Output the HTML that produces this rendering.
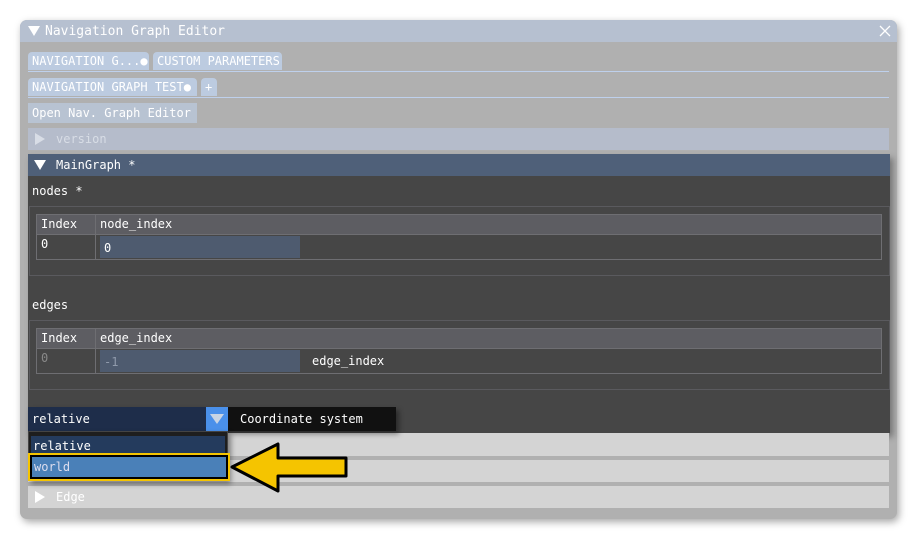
<!DOCTYPE html>
<html><head><style>
*{box-sizing:border-box;margin:0;padding:0}
body{width:918px;height:540px;background:#fff;position:relative;overflow:hidden;font-family:"DejaVu Sans Mono","Liberation Mono",monospace;font-size:12px}
.a{position:absolute;white-space:nowrap}
.win{left:20px;top:20px;width:877px;height:499px;background:#b0b0b0;border-radius:7px;box-shadow:2px 3px 8px rgba(0,0,0,.35)}
.t{color:#fff;white-space:nowrap;line-height:1}
.tab{background:#bccbe0;color:#fff;height:18px;line-height:18px;padding:0 4px;border-radius:4px 4px 0 0;overflow:hidden}
.line{height:1px;background:#bed0ec;left:28px;width:861px}
.hd{background:#5d5d62}
.bd{border:1px solid #6e6e72}
.tri{position:absolute}
</style></head><body>
<div class="a win"></div>
<div class="a" style="left:20px;top:20px;width:877px;height:22px;background:#b6c0d0;border-radius:7px 7px 0 0"></div>
<svg class="tri" style="left:28px;top:26px" width="12" height="11"><path d="M0 0H12L6 10Z" fill="#fff"/></svg>
<div class="a t" style="left:45px;top:25px;font-size:13px">Navigation Graph Editor</div>
<svg class="a" style="left:879px;top:25px" width="12" height="12"><path d="M1 1L11 11M11 1L1 11" stroke="#fff" stroke-width="1.3"/></svg>

<div class="a tab" style="left:28px;top:52px;width:121px">NAVIGATION G...●</div>
<div class="a tab" style="left:153px;top:52px;width:129px">CUSTOM PARAMETERS</div>
<div class="a line" style="top:71px"></div>
<div class="a tab" style="left:28px;top:78px;width:169px">NAVIGATION GRAPH TEST●</div>
<div class="a tab" style="left:201px;top:78px;width:16px;padding:0 4px">+</div>
<div class="a line" style="top:97px"></div>
<div class="a" style="left:28px;top:103px;width:169px;height:20px;background:#b8c3d2;color:#fff;line-height:20px;padding-left:4px">Open Nav. Graph Editor</div>
<div class="a" style="left:28px;top:128px;width:861px;height:22px;background:#b5bccb;color:#d8dde6;line-height:22px;padding-left:28px">version</div>
<svg class="tri" style="left:35px;top:133px" width="10" height="12"><path d="M0 0V12L10 6Z" fill="#d8dde6"/></svg>

<div class="a" style="left:28px;top:154px;width:862px;height:279px;background:#464646;box-shadow:3px 4px 6px rgba(0,0,0,.35)"></div>
<div class="a" style="left:28px;top:154px;width:862px;height:22px;background:#4f6079;color:#fff;line-height:22px;padding-left:28px">MainGraph *</div>
<svg class="tri" style="left:34px;top:160px" width="12" height="11"><path d="M0 0H12L6 10Z" fill="#fff"/></svg>
<div class="a t" style="left:32px;top:185px">nodes *</div>
<div class="a bd" style="left:29px;top:206px;width:861px;height:70px;border-color:#5a5a5e"></div>
<div class="a bd" style="left:36px;top:214px;width:846px;height:46px"></div>
<div class="a hd" style="left:37px;top:215px;width:844px;height:20px;border-bottom:1px solid #6e6e72"></div>
<div class="a" style="left:95px;top:215px;width:1px;height:44px;background:#6e6e72"></div>
<div class="a t" style="left:41px;top:218px">Index</div>
<div class="a t" style="left:100px;top:218px">node_index</div>
<div class="a t" style="left:41px;top:238px">0</div>
<div class="a" style="left:100px;top:236px;width:200px;height:22px;background:#4e5b6f"></div>
<div class="a t" style="left:104px;top:242px">0</div>

<div class="a t" style="left:32px;top:299px">edges</div>
<div class="a bd" style="left:29px;top:320px;width:861px;height:70px;border-color:#5a5a5e"></div>
<div class="a bd" style="left:36px;top:328px;width:846px;height:46px"></div>
<div class="a hd" style="left:37px;top:329px;width:844px;height:20px;border-bottom:1px solid #6e6e72"></div>
<div class="a" style="left:95px;top:329px;width:1px;height:44px;background:#6e6e72"></div>
<div class="a t" style="left:41px;top:332px">Index</div>
<div class="a t" style="left:100px;top:332px">edge_index</div>
<div class="a t" style="left:41px;top:352px;color:#888">0</div>
<div class="a" style="left:100px;top:350px;width:200px;height:22px;background:#4e5b6f"></div>
<div class="a t" style="left:104px;top:356px;color:#8f9aab">-1</div>
<div class="a t" style="left:312px;top:355px">edge_index</div>

<div class="a" style="left:28px;top:433px;width:861px;height:23px;background:#d4d4d4"></div>
<div class="a" style="left:28px;top:460px;width:861px;height:22px;background:#d4d4d4"></div>
<div class="a" style="left:28px;top:486px;width:861px;height:22px;background:#d4d4d4;color:#fff;line-height:22px;padding-left:28px">Edge</div>
<svg class="tri" style="left:35px;top:491px" width="10" height="12"><path d="M0 0V12L10 6Z" fill="#fff"/></svg>

<div class="a" style="left:28px;top:407px;width:368px;height:24px;background:#111;box-shadow:3px 3px 5px rgba(0,0,0,.4)"></div>
<div class="a" style="left:28px;top:407px;width:178px;height:24px;background:#1e2d4a;color:#fff;line-height:24px;padding-left:4px">relative</div>
<div class="a" style="left:206px;top:407px;width:22px;height:24px;background:#4a90ea"></div>
<svg class="a" style="left:209px;top:413px" width="16" height="12"><path d="M1 1H15L8 11Z" fill="#c8d4e4"/></svg>
<div class="a t" style="left:240px;top:413px">Coordinate system</div>

<div class="a" style="left:28px;top:431px;width:200px;height:50px;background:#1e1e1e;border:1px solid #444;box-shadow:3px 3px 5px rgba(0,0,0,.4)"></div>
<div class="a" style="left:31px;top:436px;width:194px;height:20px;background:#243b5d;color:#fff;line-height:20px;padding-left:2px">relative</div>
<div class="a" style="left:28px;top:453px;width:202px;height:28px;border:2px solid #f5c400;background:#000;padding:2px"><div style="background:#4a80b8;height:100%;color:#dde;line-height:20px;padding-left:2px">world</div></div>
<svg class="a" style="left:228px;top:440px" width="124" height="56"><path d="M4 27L50 4V18H118V36H50V51Z" fill="#f5c400" stroke="#000" stroke-width="3" stroke-linejoin="round"/></svg>
</body></html>
